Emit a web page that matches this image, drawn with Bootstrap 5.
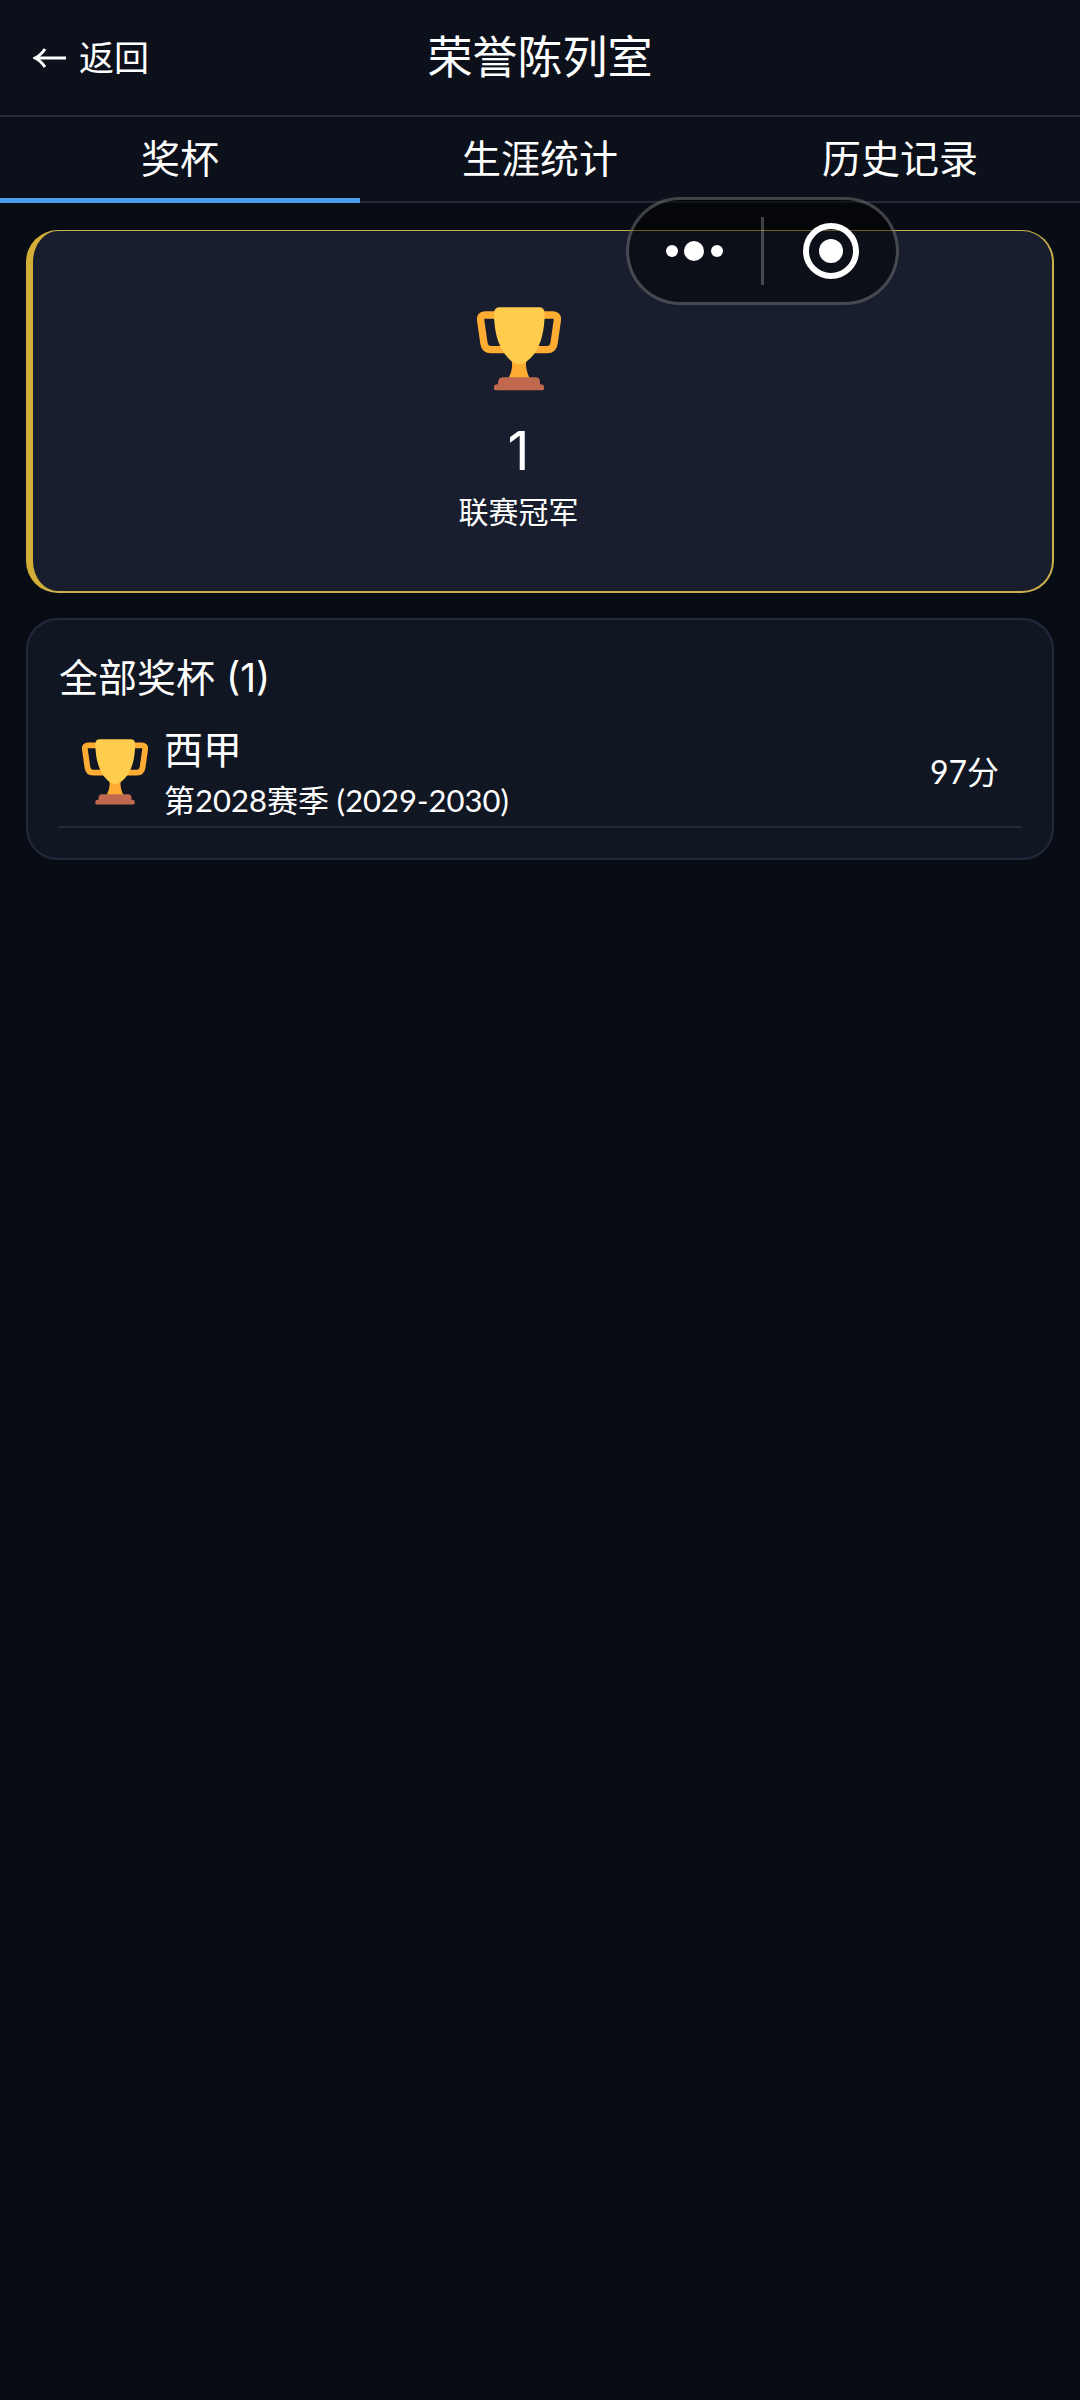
<!DOCTYPE html>
<html lang="zh-CN">
<head>
<meta charset="utf-8">
<meta name="viewport" content="width=device-width, initial-scale=1">
<title>荣誉陈列室</title>
<link href="https://cdn.jsdelivr.net/npm/bootstrap@5.3.0/dist/css/bootstrap.min.css" rel="stylesheet">
<style>
  :root { --line: #242a3a; --panel: #0c101b; --gold: #d4af37; }
  body { background: #080c15; color: #fff; font-family: Inter, "Noto Sans CJK SC", sans-serif; font-size: 30px; line-height: 44px; }
  button { color: inherit; }
  .topbar { background: var(--panel); border-bottom: 2px solid var(--line); padding: 0 33px; height: 117px; }
  .back-btn { font-size: 35px; line-height: 50px; gap: 12px; }
  .page-title { font-size: 45px; line-height: 60px; font-weight: 400; }
  .tab-strip { background: var(--panel); border-bottom: 2px solid var(--line); }
  .tab-btn { font-size: 39px; line-height: 56px; padding: 14px 0 11px; margin-bottom: -2px; border-bottom: 5px solid transparent; flex: 1 1 0; }
  .tab-btn.active { border-bottom-color: #4a9eed; }
  .content { padding: 27px 26px; gap: 25px; }
  .honor-card { background: #181e2e; border: 2px solid #cbb04c; border-top-width: 1px; border-left: 7px solid var(--gold); border-radius: 32px; padding: 76px 48px 57px 0; }
  .honor-cup { width: 84px; height: 84px; }
  .honor-count { font-size: 54px; line-height: 68px; margin-top: 26px; }
  .honor-label { margin-top: 5px; }
  .list-card { background: #111623; border: 2px solid var(--line); border-radius: 32px; padding: 30px 31px; }
  .list-title { font-size: 39px; line-height: 56px; font-weight: 400; }
  .cup-row { border-bottom: 2px solid var(--line); padding: 16px 22px 4px 23px; gap: 16px; }
  .row-cup { width: 66px; height: 66px; }
  .league { font-size: 39px; line-height: 56px; }
  .season, .score { font-family: Lato, "Noto Sans CJK SC", sans-serif; }
  .season { font-size: 31px; }
  .score { font-size: 32px; }
  .capsule { top: 197px; right: 181px; width: 273px; height: 108px; border: 3px solid rgba(255,255,255,.24); border-radius: 54px; background: rgba(0,0,0,.48); }
  .capsule-sep { width: 3px; height: 68px; background: rgba(255,255,255,.24); }
</style>
</head>
<body>
<svg class="d-none" aria-hidden="true">
  <symbol id="cup" viewBox="108 80 252 252">
    <g fill="none" stroke="#ffac33" stroke-width="22" stroke-linejoin="round">
      <path d="M170 104H132Q117 104 119 120L129 190Q132 208 150 208H192"/>
      <path d="M298 104H336Q351 104 349 120L339 190Q336 208 318 208H276"/>
    </g>
    <path fill="#ffac33" d="M212 236H256C252 262 260 280 266 294H202C210 280 216 262 212 236Z"/>
    <path fill="#ffcc4d" d="M176 81H294Q310 81 311 98C311 150 300 192 280 220Q256 251 234 252Q214 251 192 222C170 192 159 150 159 98Q160 81 176 81Z"/>
    <path fill="#c1694f" d="M184 291H286Q297 292 297 306V312Q309 311 309 321V326Q309 330 303 330H165Q159 330 159 326V321Q159 311 171 312V306Q172 292 184 291Z"/>
  </symbol>
</svg>

<header class="topbar d-flex align-items-center">
  <div class="col text-start">
    <button type="button" class="back-btn btn p-0 border-0 d-inline-flex align-items-center text-white">
      <svg width="34" height="20" viewBox="0 0 34 20" fill="none" stroke="#fff" stroke-width="3" aria-hidden="true"><path d="M33 10H3M12 1Q8 7 2 10Q8 13 12 19"/></svg>
      <span>返回</span>
    </button>
  </div>
  <h1 class="page-title m-0">荣誉陈列室</h1>
  <div class="col"></div>
</header>

<nav class="tab-strip d-flex">
  <button type="button" class="tab-btn active bg-transparent border-top-0 border-start-0 border-end-0">奖杯</button>
  <button type="button" class="tab-btn bg-transparent border-top-0 border-start-0 border-end-0">生涯统计</button>
  <button type="button" class="tab-btn bg-transparent border-top-0 border-start-0 border-end-0">历史记录</button>
</nav>

<main class="content d-flex flex-column">
  <section class="honor-card d-flex flex-column align-items-center">
    <svg class="honor-cup" aria-hidden="true"><use href="#cup"/></svg>
    <div class="honor-count">1</div>
    <div class="honor-label">联赛冠军</div>
  </section>

  <section class="list-card">
    <h2 class="list-title m-0">全部奖杯 (1)</h2>
    <div class="cup-row d-flex align-items-center">
      <svg class="row-cup flex-shrink-0" aria-hidden="true"><use href="#cup"/></svg>
      <div class="flex-grow-1">
        <div class="league">西甲</div>
        <div class="season">第2028赛季 (2029-2030)</div>
      </div>
      <div class="score">97分</div>
    </div>
  </section>
</main>

<div class="capsule position-absolute d-flex align-items-center">
  <button type="button" class="btn p-0 border-0 col d-flex justify-content-center" aria-label="更多">
    <svg width="60" height="60" viewBox="0 0 60 60" fill="#fff" aria-hidden="true"><circle cx="7" cy="30" r="6"/><circle cx="29" cy="30" r="10"/><circle cx="52" cy="30" r="6"/></svg>
  </button>
  <span class="capsule-sep"></span>
  <button type="button" class="btn p-0 border-0 col d-flex justify-content-center" aria-label="关闭">
    <svg width="60" height="60" viewBox="0 0 60 60" aria-hidden="true"><circle cx="31" cy="30" r="25" fill="none" stroke="#fff" stroke-width="6"/><circle cx="31" cy="30" r="12" fill="#fff"/></svg>
  </button>
</div>
<script src="https://cdn.jsdelivr.net/npm/bootstrap@5.3.0/dist/js/bootstrap.bundle.min.js"></script>
</body>
</html>
